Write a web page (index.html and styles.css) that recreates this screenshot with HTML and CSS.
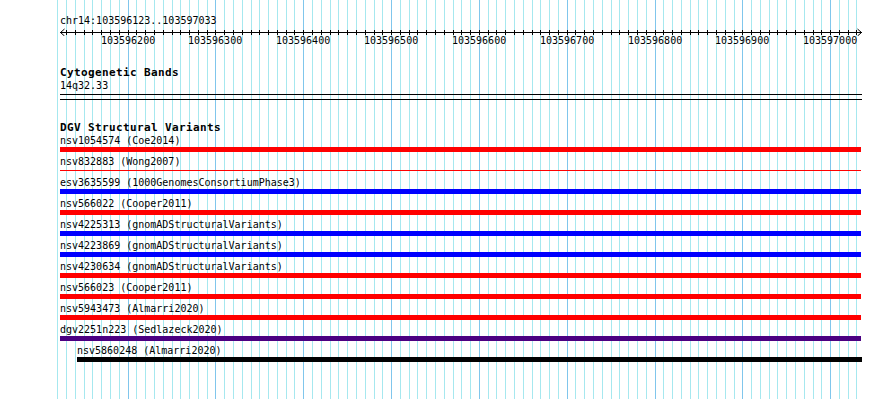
FILE: index.html
```html
<!DOCTYPE html>
<html lang="en">
  <head>
    <meta charset="UTF-8" />
    <title>chr14:103596123..103597033</title>
    <link rel="stylesheet" href="styles.css">
  </head>
  <body>
    <div class="panel">
      <svg class="grid" id="grid" width="890" height="399"></svg>

      <div class="tracks">
        <div class="ruler-title">chr14:103596123..103597033</div>
        <div class="ruler-scale" id="rulerScale">
          <svg class="axis" id="axis" width="890" height="9"></svg>
        </div>

        <div class="track-title cyto-title">Cytogenetic Bands</div>
        <div class="band-label">14q32.33</div>
        <div class="band"></div>

        <div class="track-title dgv-title">DGV Structural Variants</div>
        <div class="feature">
          <div class="feature-label">nsv1054574 (Coe2014)</div>
          <div class="bar red"></div>
        </div>
        <div class="feature">
          <div class="feature-label">nsv832883 (Wong2007)</div>
          <div class="bar line"></div>
        </div>
        <div class="feature">
          <div class="feature-label">esv3635599 (1000GenomesConsortiumPhase3)</div>
          <div class="bar blue"></div>
        </div>
        <div class="feature">
          <div class="feature-label">nsv566022 (Cooper2011)</div>
          <div class="bar red"></div>
        </div>
        <div class="feature">
          <div class="feature-label">nsv4225313 (gnomADStructuralVariants)</div>
          <div class="bar blue"></div>
        </div>
        <div class="feature">
          <div class="feature-label">nsv4223869 (gnomADStructuralVariants)</div>
          <div class="bar blue"></div>
        </div>
        <div class="feature">
          <div class="feature-label">nsv4230634 (gnomADStructuralVariants)</div>
          <div class="bar red"></div>
        </div>
        <div class="feature">
          <div class="feature-label">nsv566023 (Cooper2011)</div>
          <div class="bar red"></div>
        </div>
        <div class="feature">
          <div class="feature-label">nsv5943473 (Almarri2020)</div>
          <div class="bar red"></div>
        </div>
        <div class="feature">
          <div class="feature-label">dgv2251n223 (Sedlazeck2020)</div>
          <div class="bar indigo"></div>
        </div>
        <div class="feature" style="padding-left: 17px">
          <div class="feature-label">nsv5860248 (Almarri2020)</div>
          <div class="bar black" style="width: 785px"></div>
        </div>
      </div>
    </div>

    <script>
      const start = 103596123;
      const scale = 800 / 911;
      const ns = "http://www.w3.org/2000/svg";

      function toX(bp) {
        return Math.floor(60.5 + (bp - start) * scale);
      }

      function rect(svg, x, y, w, h, cls) {
        const r = document.createElementNS(ns, "rect");
        r.setAttribute("x", x);
        r.setAttribute("y", y);
        r.setAttribute("width", w);
        r.setAttribute("height", h);
        r.setAttribute("class", cls);
        svg.appendChild(r);
      }

      const grid = document.getElementById("grid");
      const axis = document.getElementById("axis");
      const rulerScale = document.getElementById("rulerScale");

      // grid lines every 10bp, darker every 100bp
      for (let bp = 103596120; bp <= 103597030; bp += 10) {
        const x = toX(bp);
        rect(grid, x, 0, 1, 399, bp % 100 === 0 ? "major" : "minor");
        if (x > 60) rect(axis, x, 3, 1, 5, "tick");
        if (bp % 100 === 0) {
          const label = document.createElement("div");
          label.className = "tick-label";
          label.textContent = bp;
          label.style.left = x - 27 + "px";
          rulerScale.appendChild(label);
        }
      }

      rect(axis, 60, 5, 802, 1, "tick");
      const arrows = document.createElementNS(ns, "path");
      arrows.setAttribute("d", "M64.5 2 L60.5 5.5 L64.5 9 M857.5 2 L861.5 5.5 L857.5 9");
      arrows.setAttribute("class", "arrow");
      axis.appendChild(arrows);
    </script>
  </body>
</html>
```

FILE: styles.css
```css
body {
  margin: 0;
  background: #fff;
}

.panel {
  position: relative;
  width: 890px;
  height: 399px;
  overflow: hidden;
  font-family: "DejaVu Sans Mono", "Liberation Mono", monospace;
  font-size: 10px;
  color: #000;
}

.grid {
  position: absolute;
  top: 0;
  left: 0;
}

.grid .minor {
  fill: #a6e8ef;
}

.grid .major {
  fill: #80c6ec;
}

.tracks {
  position: relative;
  padding-top: 14px;
}

.ruler-title {
  padding-left: 60px;
  height: 13px;
  line-height: 13px;
}

.ruler-scale {
  position: relative;
  height: 22px;
}

.axis {
  position: absolute;
  top: 0;
  left: 0;
}

.axis .tick {
  fill: #000;
}

.axis .arrow {
  fill: none;
  stroke: #000;
  stroke-width: 1;
}

.tick-label {
  position: absolute;
  top: 7px;
  width: 54px;
  text-align: center;
  line-height: 13px;
  white-space: nowrap;
}

.track-title {
  padding-left: 60px;
  font-size: 11px;
  font-weight: bold;
  letter-spacing: 0.38px;
  height: 13px;
  line-height: 13px;
  white-space: nowrap;
}

.cyto-title {
  margin-top: 18px;
  height: 12px;
  line-height: 12px;
}

.band-label {
  padding-left: 60px;
  height: 13px;
  line-height: 13px;
}

.band {
  margin: 2px 0 0 60px;
  width: 802px;
  height: 6px;
  box-sizing: border-box;
  border-top: 1px solid #000;
  border-bottom: 1px solid #000;
}

.dgv-title {
  margin-top: 21px;
}

.feature {
  height: 21px;
}

.feature-label {
  padding-left: 60px;
  height: 13px;
  line-height: 13px;
  white-space: nowrap;
}

.bar {
  margin-left: 60px;
  width: 801px;
  height: 5px;
}

.bar.red {
  background: #ff0000;
}

.bar.blue {
  background: #0000ff;
}

.bar.indigo {
  background: #4b0082;
}

.bar.black {
  background: #000;
}

.bar.line {
  height: 1px;
  margin-top: 2px;
  background: #ff0000;
}
```
